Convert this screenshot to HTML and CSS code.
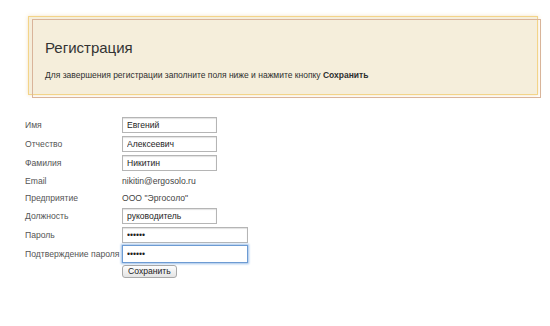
FILE: index.html
```
<!DOCTYPE html>
<html lang="ru">
<head>
    <meta charset="UTF-8">
    <title>Регистрация</title>
    <link rel="stylesheet" href="styles.css">
</head>
<body>
    <div class="notice">
        <h1 class="notice-title">Регистрация</h1>
        <p class="notice-text">Для завершения регистрации заполните поля ниже и нажмите кнопку <b>Сохранить</b></p>
    </div>
    <form class="reg-form">
        <div class="row"><label>Имя</label><input class="field" type="text" value="Евгений"></div>
        <div class="row"><label>Отчество</label><input class="field" type="text" value="Алексеевич"></div>
        <div class="row"><label>Фамилия</label><input class="field" type="text" value="Никитин"></div>
        <div class="row text"><label>Email</label><span class="value">nikitin@ergosolo.ru</span></div>
        <div class="row text"><label>Предприятие</label><span class="value">ООО "Эргосоло"</span></div>
        <div class="row"><label>Должность</label><input class="field" type="text" value="руководитель"></div>
        <div class="row"><label>Пароль</label><input class="field wide" type="password" value="123456"></div>
        <div class="row"><label>Подтверждение пароля</label><input class="field wide focus" type="password" value="123456"></div>
        <div class="row btn-row"><span></span><button type="button" class="save-btn">Сохранить</button></div>
    </form>
</body>
</html>
```
FILE: styles.css
```
html, body {
    margin: 0;
    padding: 0;
}
body {
    background: #fff;
    font-family: "Liberation Sans", Arial, sans-serif;
    color: #333;
}
.notice {
    position: relative;
    margin: 16px 12px 0 28px;
    height: 77px;
    padding: 0 16px;
    background: #f5eedb;
    border: 1px solid #f3d488;
    box-shadow: 0 0 4px rgba(230, 190, 120, 0.45);
}
.notice::after {
    content: "";
    position: absolute;
    top: 2px;
    left: 3px;
    right: -4px;
    bottom: -4px;
    border: 1px solid #d9b49a;
    pointer-events: none;
}
.notice-title {
    margin: 0;
    padding-top: 22px;
    font-size: 15px;
    font-weight: normal;
    color: #333;
    line-height: 18px;
}
.notice-text {
    margin: 13px 0 0;
    font-size: 8.5px;
    line-height: 11px;
    color: #2e2e2e;
}
.reg-form {
    margin-top: 20px;
    padding-left: 25px;
    display: flex;
    flex-direction: column;
}
.row {
    display: flex;
    align-items: center;
    height: 19px;
    font-size: 8.6px;
}
.row.text {
    height: 17px;
}
.row label,
.row > span:first-child {
    width: 97px;
    color: #555;
    white-space: nowrap;
}
.value {
    color: #444;
}
.field {
    box-sizing: border-box;
    width: 95px;
    height: 16px;
    margin: 0;
    padding: 0 4px;
    border: 1px solid #b5b5b5;
    box-shadow: inset 0 1px 1px rgba(0,0,0,0.12);
    font-family: inherit;
    font-size: 8.6px;
    color: #1e1e1e;
    background: #fff;
}
.field.wide {
    width: 126px;
}
.field.focus {
    height: 18px;
    border: 1px solid #6d9bd3;
    box-shadow: 0 0 2px 1px #9ec0e8;
    outline: none;
}
.btn-row {
    height: 17px;
    margin-top: 0;
}
.save-btn {
    height: 13px;
    padding: 0 5px;
    font-family: inherit;
    font-size: 8.6px;
    color: #222;
    border: 1px solid #a8a8a8;
    border-radius: 3px;
    background: linear-gradient(#fdfdfd, #e4e4e4);
    line-height: 11px;
    cursor: pointer;
}
```
